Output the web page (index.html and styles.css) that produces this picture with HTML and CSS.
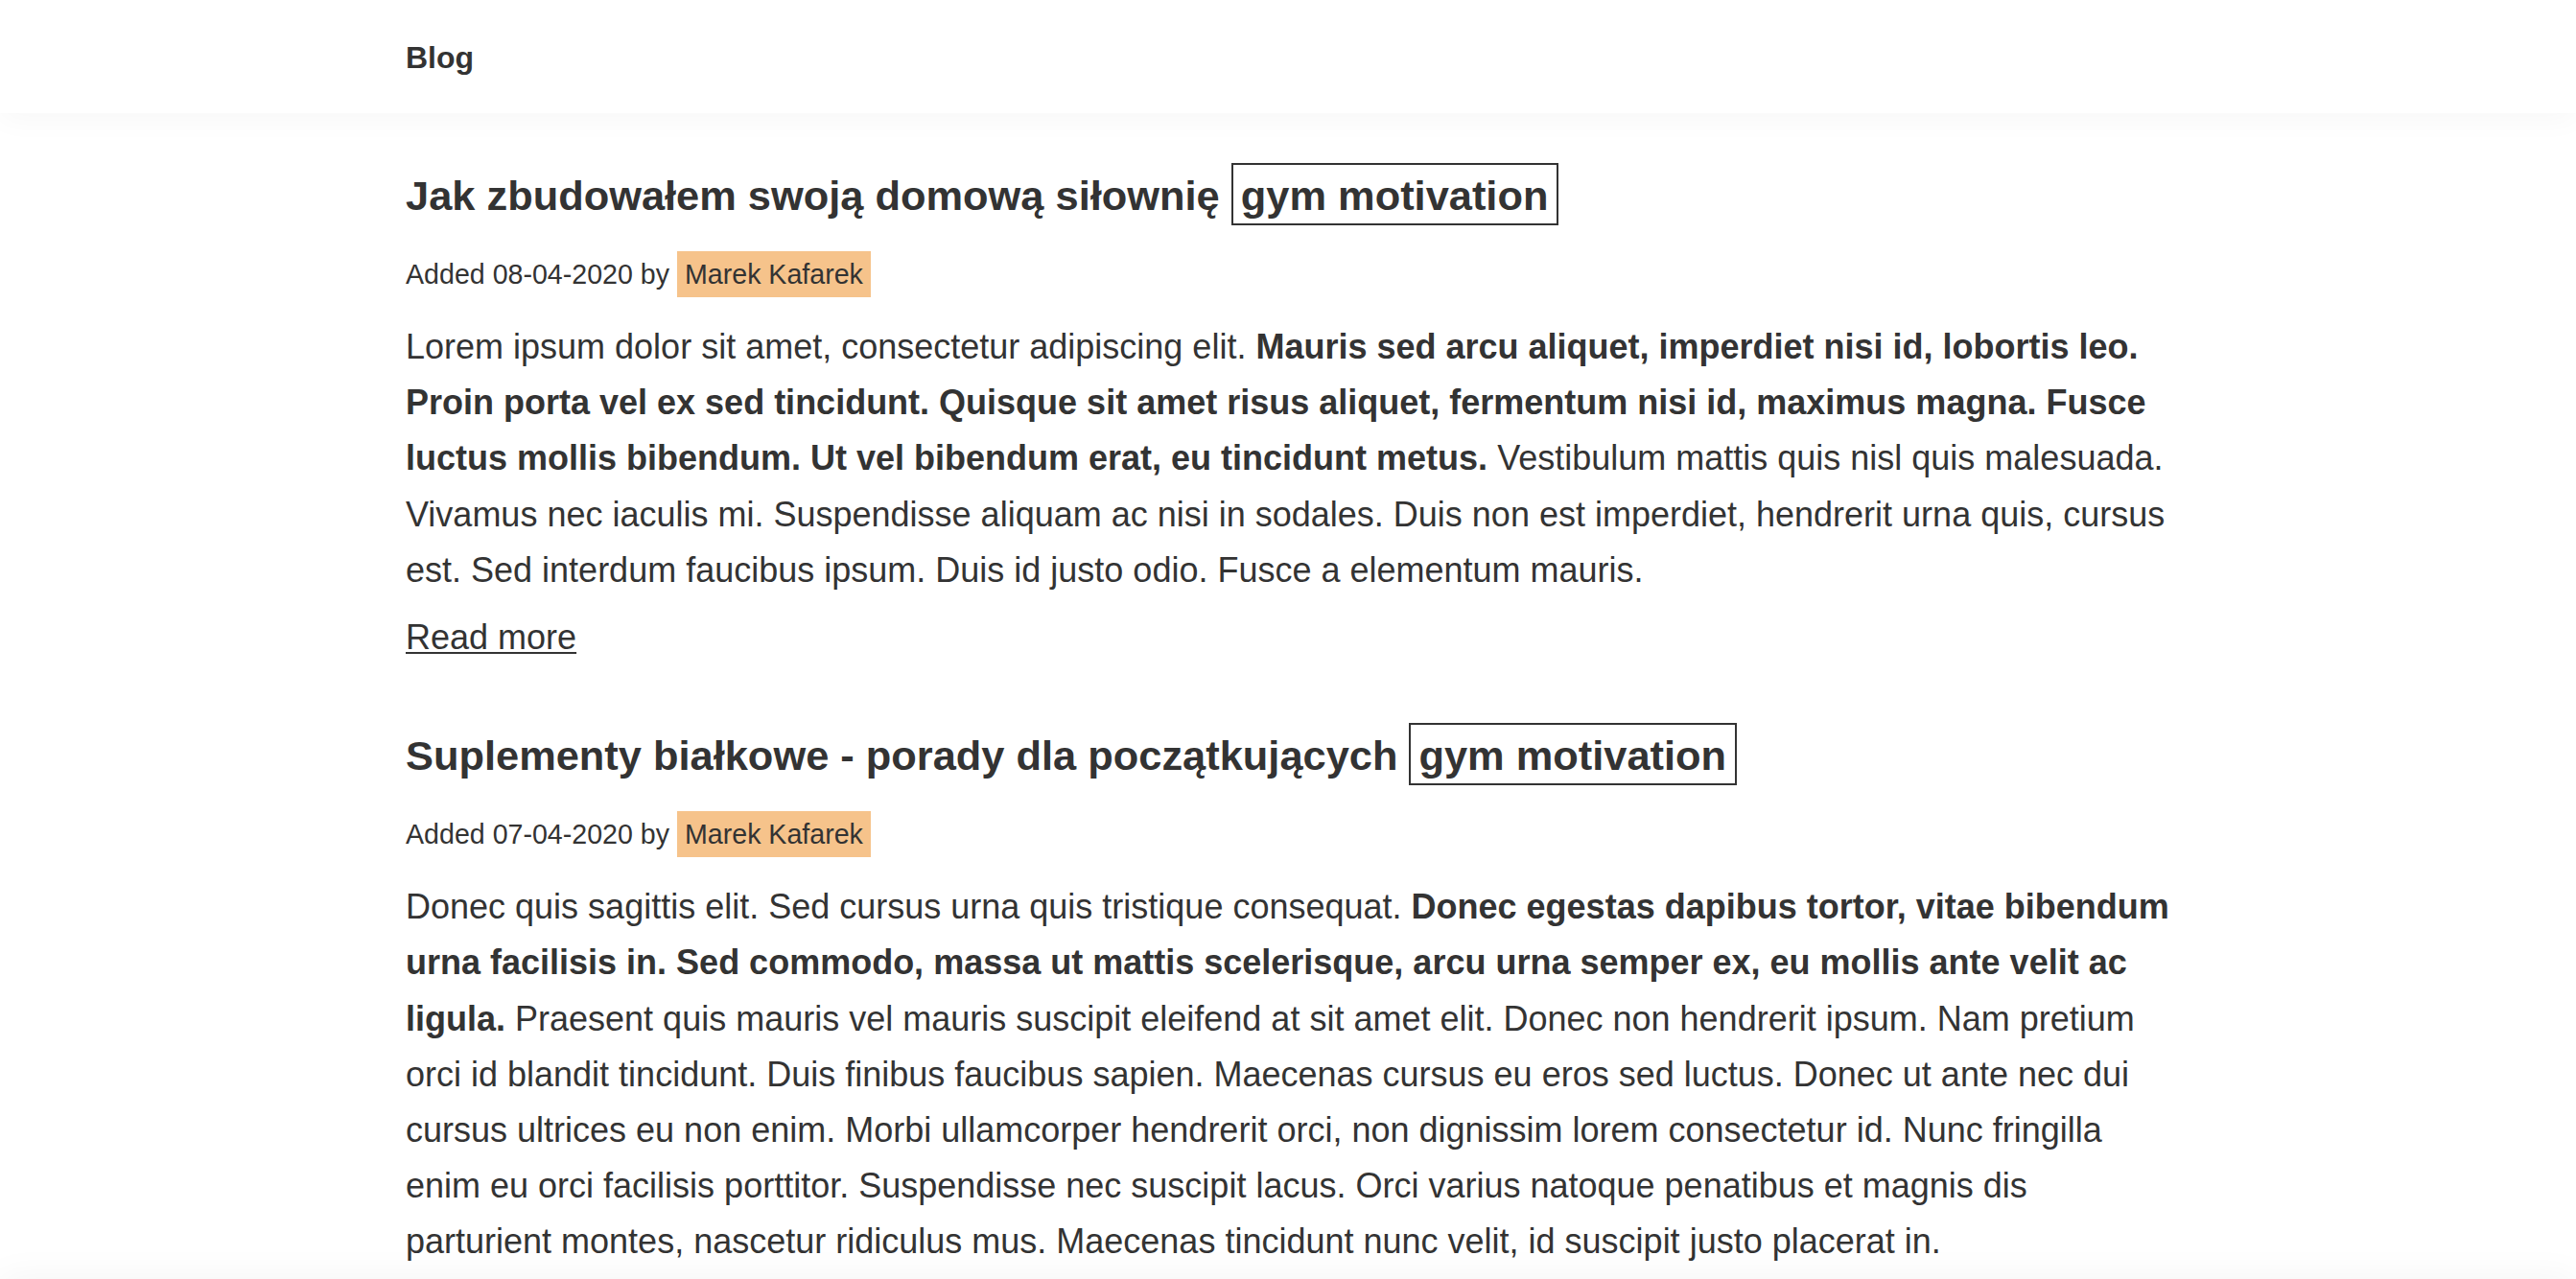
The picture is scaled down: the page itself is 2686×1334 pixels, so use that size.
FILE: index.html
```html
<!DOCTYPE html>
<html lang="pl">
<head>
<meta charset="utf-8">
<title>Blog</title>
<link rel="stylesheet" href="styles.css">
</head>
<body>
<header class="site-header">
  <div class="container header-inner">
    <span class="brand">Blog</span>
  </div>
</header>
<main class="container posts">
  <article class="post">
    <h2 class="post-title">Jak zbudowałem swoją domową siłownię <span class="tag">gym motivation</span></h2>
    <div class="meta">Added 08-04-2020 by <span class="author">Marek Kafarek</span></div>
    <p class="excerpt">Lorem ipsum dolor sit amet, consectetur adipiscing elit. <b>Mauris sed arcu aliquet, imperdiet nisi id, lobortis leo. Proin porta vel ex sed tincidunt. Quisque sit amet risus aliquet, fermentum nisi id, maximus magna. Fusce luctus mollis bibendum. Ut vel bibendum erat, eu tincidunt metus.</b> Vestibulum mattis quis nisl quis malesuada. Vivamus nec iaculis mi. Suspendisse aliquam ac nisi in sodales. Duis non est imperdiet, hendrerit urna quis, cursus est. Sed interdum faucibus ipsum. Duis id justo odio. Fusce a elementum mauris.</p>
    <a class="read-more" href="#">Read more</a>
  </article>
  <article class="post">
    <h2 class="post-title">Suplementy białkowe - porady dla początkujących <span class="tag">gym motivation</span></h2>
    <div class="meta">Added 07-04-2020 by <span class="author">Marek Kafarek</span></div>
    <p class="excerpt">Donec quis sagittis elit. Sed cursus urna quis tristique consequat. <b>Donec egestas dapibus tortor, vitae bibendum urna facilisis in. Sed commodo, massa ut mattis scelerisque, arcu urna semper ex, eu mollis ante velit ac ligula.</b> Praesent quis mauris vel mauris suscipit eleifend at sit amet elit. Donec non hendrerit ipsum. Nam pretium orci id blandit tincidunt. Duis finibus faucibus sapien. Maecenas cursus eu eros sed luctus. Donec ut ante nec dui cursus ultrices eu non enim. Morbi ullamcorper hendrerit orci, non dignissim lorem consectetur id. Nunc fringilla enim eu orci facilisis porttitor. Suspendisse nec suscipit lacus. Orci varius natoque penatibus et magnis dis parturient montes, nascetur ridiculus mus. Maecenas tincidunt nunc velit, id suscipit justo placerat in.</p>
    <a class="read-more" href="#">Read more</a>
  </article>
</main>
<footer class="site-footer"></footer>
</body>
</html>
```
FILE: styles.css
```css
html, body {
  margin: 0;
  padding: 0;
  background: #ffffff;
}

body {
  font-family: "Liberation Sans", Helvetica, Arial, sans-serif;
  color: #333333;
}

.container {
  max-width: 1840px;
  margin: 0 auto;
}

.site-header {
  position: relative;
  z-index: 1;
  height: 118px;
  background: #ffffff;
  box-shadow: 0 6px 30px rgba(0, 0, 0, 0.035);
}

.header-inner {
  height: 100%;
  display: flex;
  align-items: center;
}

.brand {
  font-size: 32px;
  font-weight: bold;
  line-height: 1;
  padding-top: 2px;
}

.posts {
  padding-top: 54px;
}

.post + .post {
  margin-top: 62px;
}

.post-title {
  margin: 0;
  font-size: 43.4px;
  font-weight: bold;
  line-height: 64px;
}

.tag {
  border: 2px solid #333333;
  padding: 8px 9px 5px 8px;
}

.meta {
  margin-top: 26px;
  font-size: 28.6px;
  line-height: 48px;
}

.author {
  background: #f6c38b;
  padding: 8px 8px 8px 8px;
}

.excerpt {
  margin: 23px 0 0;
  font-size: 36px;
  line-height: 58.2px;
}

.excerpt b {
  font-weight: bold;
}

.read-more {
  display: inline-block;
  margin-top: 12px;
  font-size: 36px;
  line-height: 58.2px;
  color: #333333;
  text-decoration: underline;
  text-decoration-thickness: 2px;
  text-underline-offset: 3px;
}

.site-footer {
  position: fixed;
  left: 0;
  right: 0;
  bottom: -60px;
  height: 60px;
  background: #ffffff;
  box-shadow: 0 0 40px rgba(0, 0, 0, 0.05);
}
```
